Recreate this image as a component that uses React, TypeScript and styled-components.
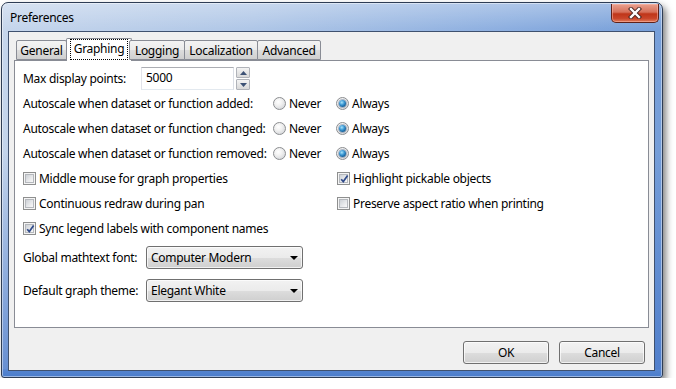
import React from "react";
import styled, { createGlobalStyle } from "styled-components";

const GlobalStyle = createGlobalStyle`
  html, body { margin: 0; padding: 0; background: #ffffff; }
  body { font-family: "Noto Sans", "Open Sans", sans-serif; font-size: 12px; letter-spacing: -0.28px; color: #000; }
  * { box-sizing: border-box; }
`;

const Window = styled.div`
  margin: 2px 0 0 1px;
  width: 662px;
  height: 376px;
  border: 1px solid #2e3d55;
  border-radius: 7px 7px 3px 3px;
  background:
    linear-gradient(to bottom, rgba(255,255,255,0.3) 0px, rgba(255,255,255,0) 26px),
    linear-gradient(to top, #4a7ccb 0px, #5585d0 7px, rgba(80,128,206,0) 8px),
    linear-gradient(to bottom, rgba(70,118,200,0) 40%, rgba(70,118,200,0.75) 100%),
    linear-gradient(100deg, #c6d6ec 0%, #b0c7e7 35%, #8dafe0 70%, #6f99d6 100%);
  box-shadow: 3px 4px 7px rgba(0, 0, 0, 0.5), inset 0 0 0 1px rgba(255,255,255,0.45);
  display: flex;
  flex-direction: column;
`;

const TitleBar = styled.div`
  height: 28px;
  display: flex;
  justify-content: space-between;
  align-items: center;
  padding-left: 8px;
`;

const Title = styled.div`
  font-size: 12px;
  color: #000;
`;

const CloseButton = styled.div`
  align-self: flex-start;
  margin-top: 1px;
  margin-right: 3px;
  width: 48px;
  height: 19px;
  border: 1px solid #5f2119;
  border-top: none;
  border-radius: 0 0 5px 5px;
  background: linear-gradient(to bottom, #e9a18f 0%, #d6705a 45%, #bf3519 55%, #c9452a 80%, #e07d5b 100%);
  box-shadow: inset 0 0 0 1px rgba(255, 190, 175, 0.5);
  display: flex;
  align-items: center;
  justify-content: center;
`;

const Client = styled.div`
  flex: 1;
  margin: 0 7px 6px 6px;
  border: 1px solid #3f516f;
  background: #f0f0f0;
  padding: 6px 5px 0 5px;
  display: flex;
  flex-direction: column;
`;

const TabsRow = styled.div`
  position: relative;
  z-index: 1;
  height: 22px;
  display: flex;
  align-items: flex-end;
  padding-left: 2px;
`;

const Tab = styled.div<{ $w: number; $active?: boolean }>`
  width: ${(p) => p.$w}px;
  height: ${(p) => (p.$active ? 23 : 20)}px;
  margin: ${(p) => (p.$active ? "0 -2px -1px -2px" : "0")};
  border: 1px solid #898c95;
  border-bottom: ${(p) => (p.$active ? "none" : "1px solid #898c95")};
  border-radius: 2px 2px 0 0;
  background: ${(p) =>
    p.$active ? "#ffffff" : "linear-gradient(to bottom, #f3f3f3 0%, #ebebeb 50%, #dddddd 51%, #cfcfcf 100%)"};
  display: flex;
  justify-content: center;
  align-items: ${(p) => (p.$active ? "flex-start" : "center")};
  padding-top: 1px;
  font-size: 12px;
  line-height: 16px;
  & + & { margin-left: ${(p) => (p.$active ? "-2px" : "-1px")}; }
`;

const FocusText = styled.span`
  outline: 1px dotted #000;
  outline-offset: 0;
  padding: 1px 3px 2px 3px;
`;

const Pane = styled.div`
  height: 268px;
  border: 1px solid #898c95;
  background: #ffffff;
  padding: 5px 0 0 8px;
  display: flex;
  flex-direction: column;
`;

const Row = styled.div`
  height: 25px;
  display: flex;
  align-items: center;
`;

const Label = styled.div<{ $w: number }>`
  width: ${(p) => p.$w}px;
  flex: none;
  white-space: nowrap;
`;

const TextBox = styled.div`
  width: 93px;
  height: 23px;
  border: 1px solid #abadb3;
  border-left-color: #e2e3ea;
  border-right-color: #dbdfe6;
  border-bottom-color: #e3e9ef;
  background: #fff;
  padding: 2px 0 0 4px;
  line-height: 16px;
`;

const Spinner = styled.div`
  margin-left: 2px;
  width: 14px;
  height: 23px;
  display: flex;
  flex-direction: column;
  gap: 1px;
`;

const SpinPart = styled.div`
  flex: 1;
  border: 1px solid #b0b3b9;
  border-radius: 1px;
  background: linear-gradient(to bottom, #f4f4f4 0%, #e6e6e6 50%, #d9d9d9 100%);
  display: flex;
  align-items: center;
  justify-content: center;
`;

const RadioRow = styled.div`
  height: 25px;
  display: grid;
  grid-template-columns: 250px 63px auto;
  align-items: center;
`;

const CheckRow = styled.div`
  height: 25px;
  display: grid;
  grid-template-columns: 314px auto;
  align-items: center;
`;

const Option = styled.div`
  display: flex;
  align-items: center;
  gap: 3px;
  white-space: nowrap;
`;

const RadioCircle = styled.div<{ $on?: boolean }>`
  width: 13px;
  height: 13px;
  border-radius: 50%;
  border: 1px solid #8b8d90;
  background: radial-gradient(circle at 40% 35%, #ffffff 0%, #f0f0f0 40%, #c9ccd1 100%);
  display: flex;
  align-items: center;
  justify-content: center;
  flex: none;
  &::after {
    content: "";
    width: 7px;
    height: 7px;
    border-radius: 50%;
    display: ${(p) => (p.$on ? "block" : "none")};
    background: radial-gradient(circle at 40% 35%, #a8e4fb 0%, #3b97d3 40%, #145c94 75%, #0c3b63 100%);
    box-shadow: 0 0 0 1px rgba(40, 70, 110, 0.35);
  }
`;

const CheckBox = styled.div`
  width: 13px;
  height: 13px;
  border: 1px solid #8e8f8f;
  background: #f4f4f4;
  padding: 1px;
  flex: none;
  position: relative;
`;

const CheckInner = styled.div`
  width: 100%;
  height: 100%;
  border: 1px solid #b5b8bd;
  background: linear-gradient(135deg, #cdd1d6 0%, #e9eaec 60%, #f8f8f8 100%);
`;

const CheckMark = styled.svg`
  position: absolute;
  left: 1px;
  top: 1px;
`;

const ComboRow = styled.div`
  height: 33px;
  display: flex;
  align-items: center;
`;

const Combo = styled.div`
  width: 157px;
  height: 23px;
  border: 1px solid #707070;
  border-radius: 3px;
  background: linear-gradient(to bottom, #f2f2f2 0%, #ebebeb 50%, #dddddd 51%, #cfcfcf 100%);
  box-shadow: inset 0 0 0 1px rgba(255, 255, 255, 0.7);
  display: flex;
  align-items: center;
  justify-content: space-between;
  padding: 0 4px 0 4px;
`;

const ButtonRow = styled.div`
  margin-top: 13px;
  display: flex;
  justify-content: flex-end;
  gap: 10px;
  padding-right: 4px;
`;

const Button = styled.div`
  width: 86px;
  height: 23px;
  border: 1px solid #707070;
  border-radius: 3px;
  background: linear-gradient(to bottom, #f2f2f2 0%, #ebebeb 50%, #dddddd 51%, #cfcfcf 100%);
  box-shadow: inset 0 0 0 1px rgba(255, 255, 255, 0.7);
  display: flex;
  align-items: center;
  justify-content: center;
`;

const Radio = ({ on, label }: { on?: boolean; label: string }) => (
  <Option>
    <RadioCircle $on={on} />
    <span>{label}</span>
  </Option>
);

const Check = ({ on, label }: { on?: boolean; label: string }) => (
  <Option>
    <CheckBox>
      <CheckInner />
      {on && (
        <CheckMark width="11" height="11" viewBox="0 0 11 11">
          <path d="M2.2 5.2 L4.3 7.6 L8.6 1.6" fill="none" stroke="#2f4a8a" strokeWidth="1.7" />
        </CheckMark>
      )}
    </CheckBox>
    <span>{label}</span>
  </Option>
);

const Arrow = () => (
  <svg width="8" height="4" viewBox="0 0 8 4">
    <path d="M0 0 L8 0 L4 4 Z" fill="#000" />
  </svg>
);

const AutoRow = ({ label }: { label: string }) => (
  <RadioRow>
    <Label $w={250}>{label}</Label>
    <Radio label="Never" />
    <Radio on label="Always" />
  </RadioRow>
);

export default function App() {
  return (
    <>
      <GlobalStyle />
      <Window>
        <TitleBar>
          <Title>Preferences</Title>
          <CloseButton>
            <svg width="14" height="12" viewBox="0 0 14 12">
              <path d="M3 2 L11 10 M11 2 L3 10" stroke="#4a2420" strokeWidth="4.2" strokeLinecap="square" />
              <path d="M3 2 L11 10 M11 2 L3 10" stroke="#ffffff" strokeWidth="2.4" strokeLinecap="square" />
            </svg>
          </CloseButton>
        </TitleBar>
        <Client>
          <TabsRow>
            <Tab $w={51}>General</Tab>
            <Tab $w={66} $active>
              <FocusText>Graphing</FocusText>
            </Tab>
            <Tab $w={56}>Logging</Tab>
            <Tab $w={74}>Localization</Tab>
            <Tab $w={64}>Advanced</Tab>
          </TabsRow>
          <Pane>
            <Row>
              <Label $w={118}>Max display points:</Label>
              <TextBox>5000</TextBox>
              <Spinner>
                <SpinPart>
                  <svg width="7" height="4" viewBox="0 0 7 4">
                    <path d="M0 4 L7 4 L3.5 0 Z" fill="#3d5275" />
                  </svg>
                </SpinPart>
                <SpinPart>
                  <svg width="7" height="4" viewBox="0 0 7 4">
                    <path d="M0 0 L7 0 L3.5 4 Z" fill="#3d5275" />
                  </svg>
                </SpinPart>
              </Spinner>
            </Row>
            <AutoRow label="Autoscale when dataset or function added:" />
            <AutoRow label="Autoscale when dataset or function changed:" />
            <AutoRow label="Autoscale when dataset or function removed:" />
            <CheckRow>
              <Check label="Middle mouse for graph properties" />
              <Check on label="Highlight pickable objects" />
            </CheckRow>
            <CheckRow>
              <Check label="Continuous redraw during pan" />
              <Check label="Preserve aspect ratio when printing" />
            </CheckRow>
            <CheckRow>
              <Check on label="Sync legend labels with component names" />
            </CheckRow>
            <ComboRow>
              <Label $w={123}>Global mathtext font:</Label>
              <Combo>
                <span>Computer Modern</span>
                <Arrow />
              </Combo>
            </ComboRow>
            <ComboRow>
              <Label $w={123}>Default graph theme:</Label>
              <Combo>
                <span>Elegant White</span>
                <Arrow />
              </Combo>
            </ComboRow>
          </Pane>
          <ButtonRow>
            <Button>OK</Button>
            <Button>Cancel</Button>
          </ButtonRow>
        </Client>
      </Window>
    </>
  );
}
